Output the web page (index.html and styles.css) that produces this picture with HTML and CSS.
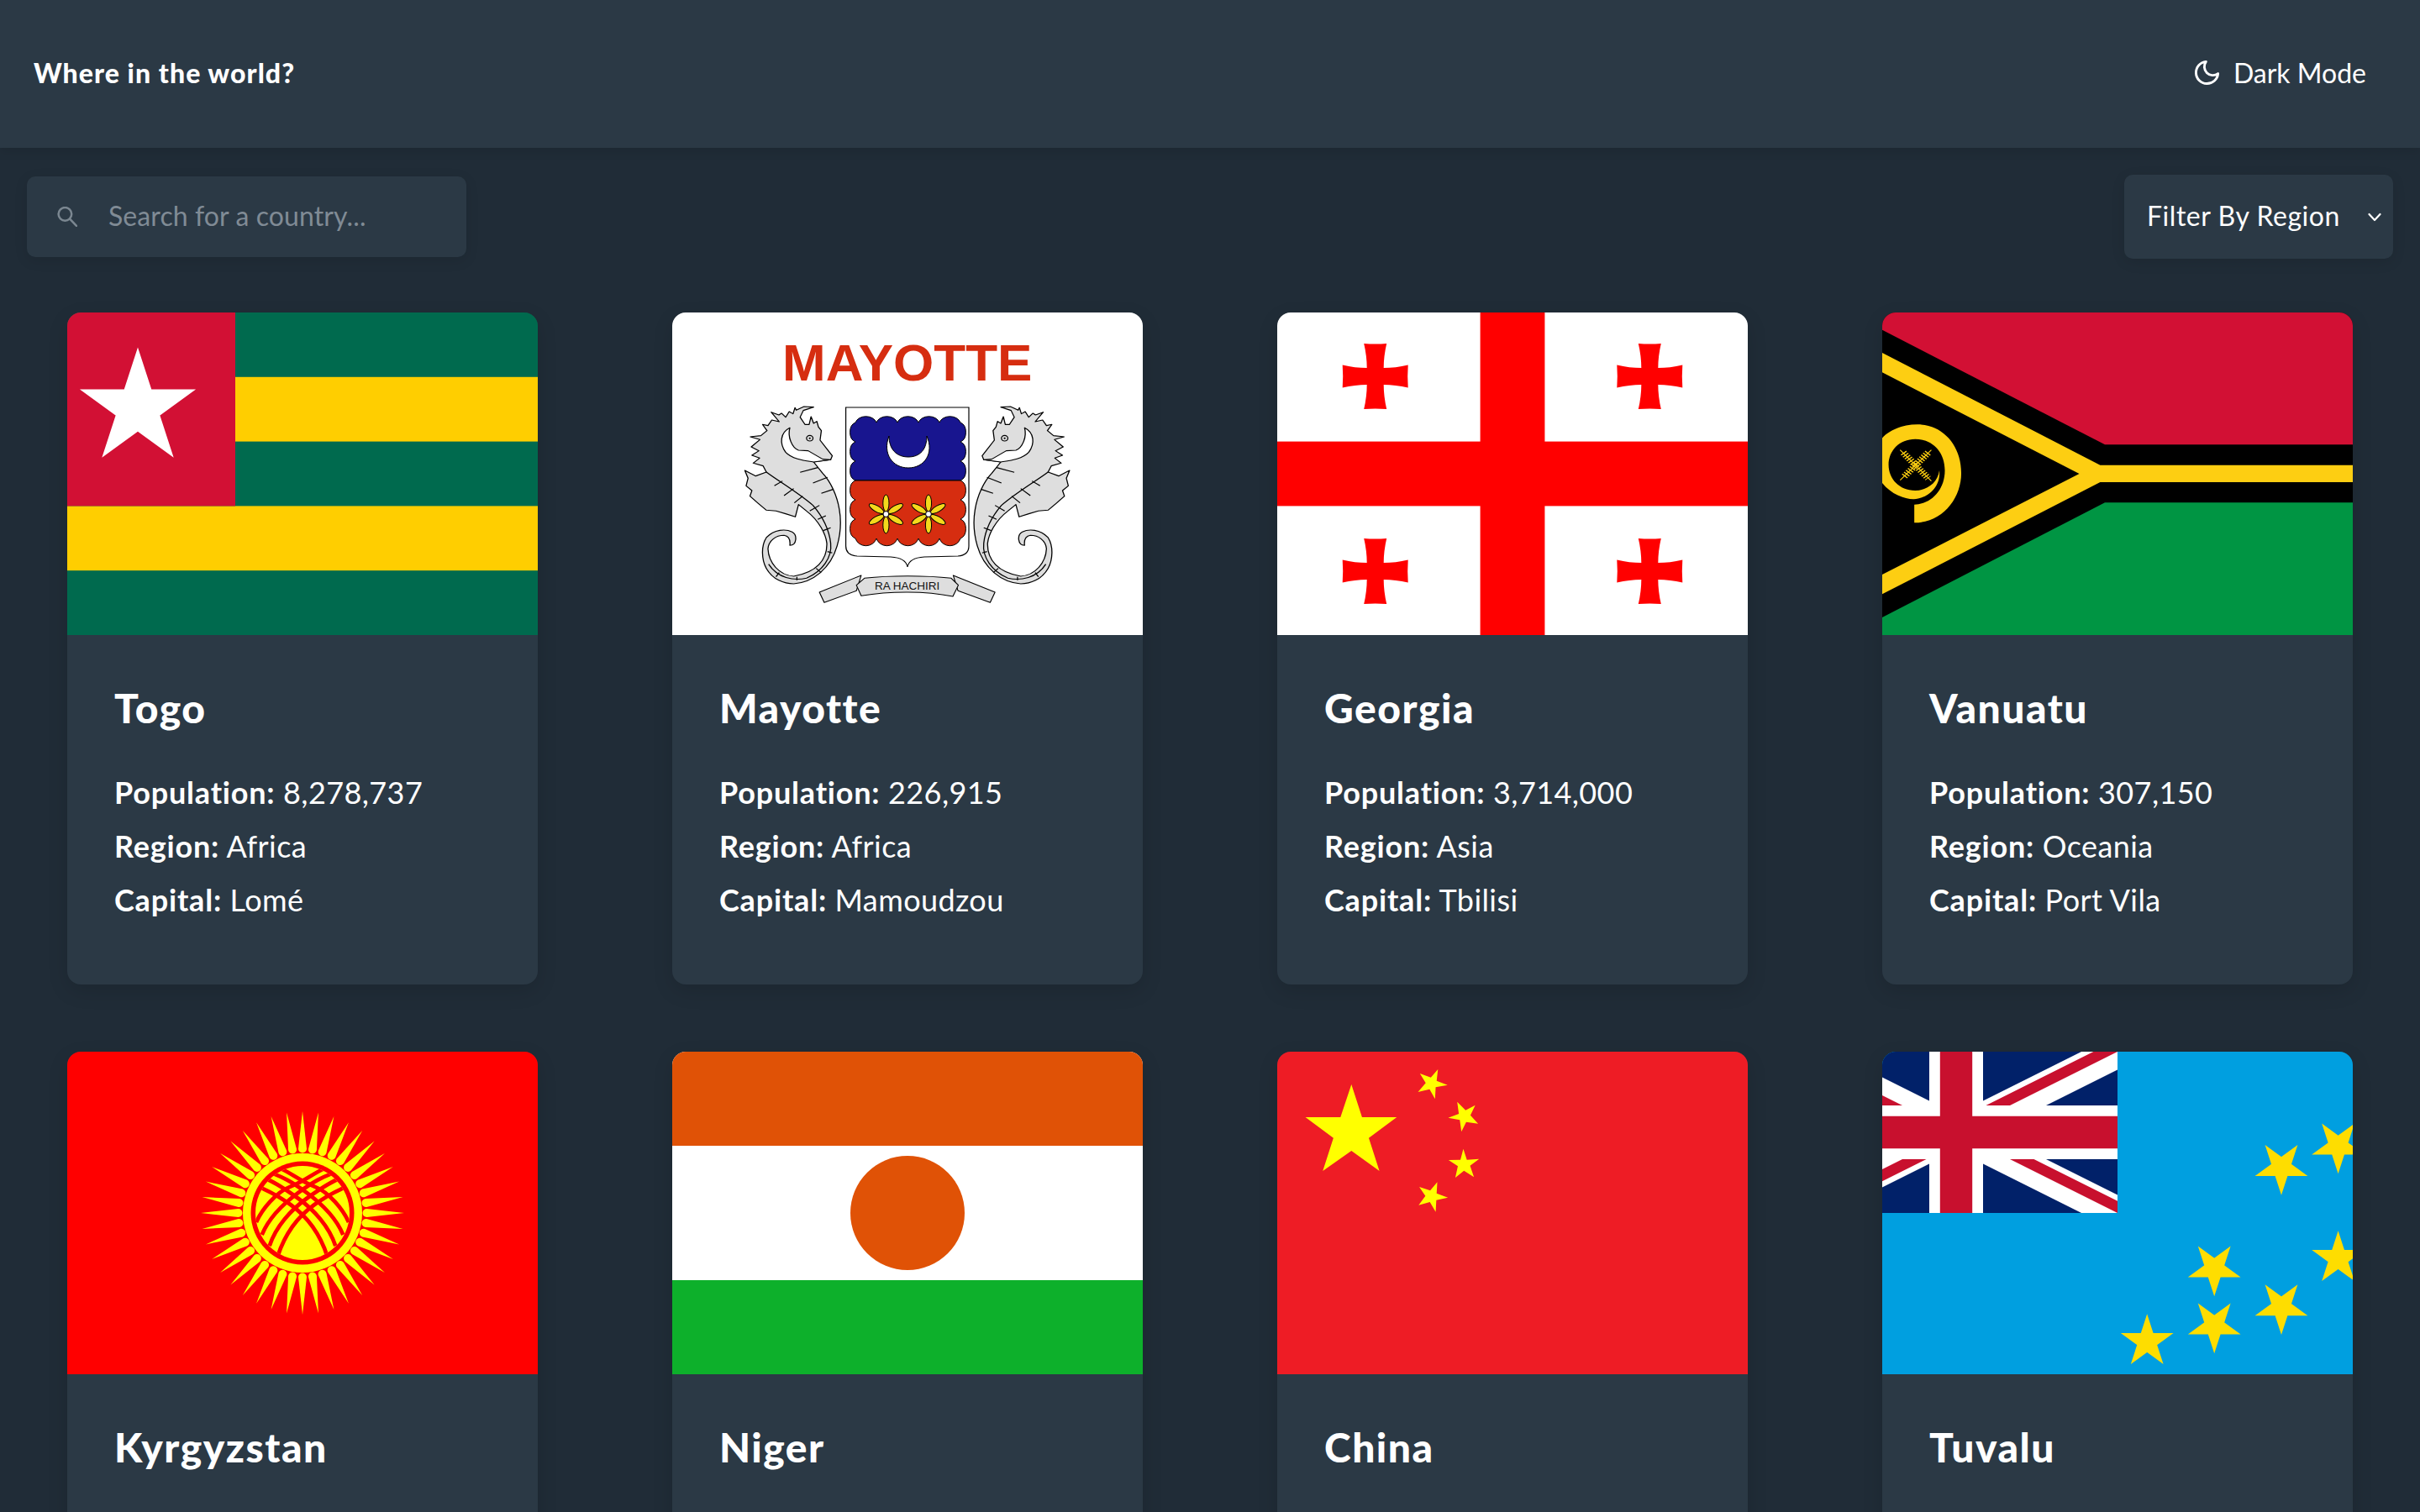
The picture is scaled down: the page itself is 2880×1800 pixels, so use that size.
FILE: index.html
```html
<!DOCTYPE html>
<html lang="en">
<head>
    <meta charset="utf-8">
    <title>Where in the world?</title>
    <link rel="stylesheet" href="styles.css">
</head>
<body>
    <header class="site-header">
        <h1 class="site-title">Where in the world?</h1>
        <button class="mode-toggle">
            <svg class="mode-icon" viewBox="0 0 24 24" fill="none" stroke="#fff" stroke-width="2" stroke-linecap="round" stroke-linejoin="round"><path d="M21 12.79A9 9 0 1 1 11.21 3 7 7 0 0 0 21 12.79z"/></svg>
            <span>Dark Mode</span>
        </button>
    </header>

    <div class="toolbar">
        <label class="search">
            <svg class="search-icon" viewBox="1 1 22 23" fill="none" stroke="#7b8791" stroke-width="2.4" stroke-linecap="round"><circle cx="9.5" cy="9.5" r="7.5"/><path d="M15 15l7.5 8"/></svg>
            <input class="search-input" type="text" placeholder="Search for a country...">
        </label>
        <div class="region-filter">
            <span>Filter By Region</span>
            <svg class="chevron" viewBox="0 0 16 11" fill="none" stroke="#fff" stroke-width="2.2" stroke-linecap="round" stroke-linejoin="round"><path d="M1.5 2l6.5 7 6.5-7"/></svg>
        </div>
    </div>

    <main class="country-grid">
        <!-- Togo -->
        <article class="card">
            <svg class="flag" viewBox="0 0 560 384">
                <rect width="560" height="384" fill="#006a4e"/>
                <rect y="76.8" width="560" height="76.8" fill="#ffce00"/>
                <rect y="230.4" width="560" height="76.8" fill="#ffce00"/>
                <rect width="200" height="230.4" fill="#d21034"/>
                <polygon transform="translate(84 114) scale(2.2)" fill="#fff" points="0,-33 19.4,26.7 -31.4,-10.2 31.4,-10.2 -19.4,26.7"/>
            </svg>
            <div class="card-body">
                <h2 class="country-name">Togo</h2>
                <p class="fact"><b>Population:</b> 8,278,737</p>
                <p class="fact"><b>Region:</b> Africa</p>
                <p class="fact"><b>Capital:</b> Lomé</p>
            </div>
        </article>

        <!-- Mayotte -->
        <article class="card">
            <svg class="flag" viewBox="0 0 560 384">
                <rect width="560" height="384" fill="#fff"/>
                <text class="flag-title" x="279.7" y="81" text-anchor="middle">MAYOTTE</text>
                <g transform="translate(-20 -12) scale(0.3827 0.3333)">
                    <g id="seahorse" fill="#dedede" stroke="#000" stroke-width="3.4" stroke-linejoin="round">
                        <path d="M545 562L550 548L512 492L516 458L507 445L502 425L492 432L484 408L478 436L465 436L450 410L460 386L492 374L462 372L438 385L434 376L428 398L416 390L405 410L392 396L384 402L360 392L385 426L362 420L350 440L333 436L347 458L328 476L295 480L325 490L298 516L322 530L300 546L324 556L304 574L335 584L345 606L312 620L278 600L288 628L282 655L300 672L294 692L320 718L345 742L375 745L405 755L435 766L445 722L470 745C510 780 530 830 533 860C535 920 500 965 430 978C385 975 352 930 350 880C352 850 375 832 400 832C415 835 420 850 418 868C440 868 442 830 425 820C405 808 370 810 345 840C328 870 330 920 345 950C365 990 400 1005 430 1005C490 1000 545 950 565 870C575 830 578 780 572 740C565 690 545 640 520 610L492 570Z"/>
                        <path fill="#fff" d="M418 448C388 465 385 505 405 535C425 560 465 565 492 570L545 562L520 560L475 530L445 528C425 520 410 480 418 448Z"/>
                        <path fill="none" d="M345 606C385 640 445 680 490 725C520 765 540 810 545 860C550 910 520 960 470 985C430 995 380 985 352 935"/>
                        <path fill="none" d="M370 655L395 638M400 690L430 665M432 716L458 692M480 745L510 725M505 775L530 762M522 815L545 805M450 607L505 590M490 645L535 625M516 682L552 668M535 890L550 895M500 950L515 965M440 980L440 992M385 965L375 980"/>
                        <circle cx="480" cy="485" r="10" fill="none"/>
                        <circle cx="480" cy="485" r="3" fill="#000" stroke="none"/>
                    </g>
                    <use href="#seahorse" transform="translate(1566 0) scale(-1 1)"/>
                    <g fill="#dedede" stroke="#000" stroke-width="3" stroke-linejoin="round">
                        <path d="M640 975L510 1035L525 1072L625 1030Z"/>
                        <path d="M926 975L1056 1035L1041 1072L941 1030Z"/>
                        <path d="M625 1010L650 985C730 975 840 975 920 985L942 1010L925 1050C840 1030 730 1030 640 1048Z"/>
                    </g>
                </g>
                <text class="flag-motto" x="279.7" y="330" text-anchor="middle">RA HACHIRI</text>
                <path fill="#fff" stroke="#000" stroke-width="1.2" d="M206.6 113H353V278Q353 289 340 290L300 291Q282 292 280 303Q278 292 260 291L220 290Q206.6 289 206.6 278Z"/>
                <path fill="#18158f" stroke="#000" d="M218 131a13 10 0 0 1 25 0a13 10 0 0 1 25 0a13 10 0 0 1 25 0a13 10 0 0 1 25 0a13 10 0 0 1 25 0a9 12 0 0 1 0 23a9 12 0 0 1 0 23a9 12 0 0 1 0 23H218a9 12 0 0 1 0 -23a9 12 0 0 1 0 -23a9 12 0 0 1 0 -23Z"/>
                <path fill="#d62d10" stroke="#000" d="M218 200H343a9 12 0 0 1 0 23a9 12 0 0 1 0 23a9 12 0 0 1 0 23a13 12 0 0 1 -25 0a13 12 0 0 1 -25 0a13 12 0 0 1 -25 0a13 12 0 0 1 -25 0a13 12 0 0 1 -25 0a9 12 0 0 1 0 -23a9 12 0 0 1 0 -23a9 12 0 0 1 0 -23Z"/>
                <path fill="#fff" stroke="#000" d="M258 147C250 168 262 185 281 185C300 185 312 168 303 147C303 163 295 172 281 172C267 172 258 163 258 147Z"/>
                <g id="flower" transform="translate(254.4 240)" fill="#f4d81c" stroke="#000">
                    <ellipse cy="-13" rx="3.6" ry="10"/>
                    <ellipse cy="-13" rx="3.6" ry="10" transform="rotate(60)"/>
                    <ellipse cy="-13" rx="3.6" ry="10" transform="rotate(120)"/>
                    <ellipse cy="-13" rx="3.6" ry="10" transform="rotate(180)"/>
                    <ellipse cy="-13" rx="3.6" ry="10" transform="rotate(240)"/>
                    <ellipse cy="-13" rx="3.6" ry="10" transform="rotate(300)"/>
                    <circle r="3.4" fill="#fff"/>
                </g>
                <use href="#flower" x="50.6"/>
            </svg>
            <div class="card-body">
                <h2 class="country-name">Mayotte</h2>
                <p class="fact"><b>Population:</b> 226,915</p>
                <p class="fact"><b>Region:</b> Africa</p>
                <p class="fact"><b>Capital:</b> Mamoudzou</p>
            </div>
        </article>

        <!-- Georgia -->
        <article class="card">
            <svg class="flag" viewBox="0 0 560 384">
                <rect width="560" height="384" fill="#fff"/>
                <rect x="241.6" width="76.8" height="384" fill="#f00"/>
                <rect y="153.6" width="560" height="76.8" fill="#f00"/>
                <path id="bolnisi" transform="translate(116.7 76)" fill="#f00" d="M-13.5 -39Q0 -38 13.5 -39Q10 -24 10 -10Q24 -10 39 -13.5Q38 0 39 13.5Q24 10 10 10Q10 24 13.5 39Q0 38 -13.5 39Q-10 24 -10 10Q-24 10 -39 13.5Q-38 0 -39 -13.5Q-24 -10 -10 -10Q-10 -24 -13.5 -39Z"/>
                <use href="#bolnisi" x="326.6"/>
                <use href="#bolnisi" y="232"/>
                <use href="#bolnisi" x="326.6" y="232"/>
            </svg>
            <div class="card-body">
                <h2 class="country-name">Georgia</h2>
                <p class="fact"><b>Population:</b> 3,714,000</p>
                <p class="fact"><b>Region:</b> Asia</p>
                <p class="fact"><b>Capital:</b> Tbilisi</p>
            </div>
        </article>

        <!-- Vanuatu -->
        <article class="card">
            <svg class="flag" viewBox="0 0 560 384">
                <rect width="560" height="384" fill="#000"/>
                <polygon fill="#d21034" points="0,0 560,0 560,157.3 265,157.3 0,20.7"/>
                <polygon fill="#009543" points="0,384 560,384 560,226.3 265,226.3 0,363"/>
                <polygon fill="#fdce12" points="0,48 259.4,181.7 560,181.7 560,202 259.4,202 0,335.3 0,312 234.5,192 0,71.3"/>
                <g transform="translate(-20 -12) scale(0.3827 0.3333)" fill="#fdce12">
                    <path d="M152 787C240 787 298 700 298 610C298 510 240 436 162 436C110 436 70 460 52 485L52 645C80 685 120 703 150 703C195 700 235 660 230 600C225 645 190 672 155 672C105 672 72 630 72 580C72 530 105 488 155 488C205 488 247 530 247 600C247 670 205 720 152 722Z"/>
                    <path fill="none" stroke="#fdce12" stroke-width="3" d="M108 527L205 638M205 527L108 635"/>
                    <path fill="none" stroke="#fdce12" stroke-width="22" stroke-dasharray="4 5" d="M118 537L195 628M195 537L118 625"/>
                </g>
            </svg>
            <div class="card-body">
                <h2 class="country-name">Vanuatu</h2>
                <p class="fact"><b>Population:</b> 307,150</p>
                <p class="fact"><b>Region:</b> Oceania</p>
                <p class="fact"><b>Capital:</b> Port Vila</p>
            </div>
        </article>

        <!-- Kyrgyzstan -->
        <article class="card">
            <svg class="flag" viewBox="0 0 560 384">
                <defs>
                    <path id="kg-ray" d="M121 0L76.5 -5A5 5 0 0 0 76.5 5Z"/>
                    <g id="kg-rays">
                        <use href="#kg-ray"/>
                        <use href="#kg-ray" transform="rotate(9)"/>
                        <use href="#kg-ray" transform="rotate(18)"/>
                        <use href="#kg-ray" transform="rotate(27)"/>
                        <use href="#kg-ray" transform="rotate(36)"/>
                    </g>
                    <clipPath id="kg-disc"><circle cx="480" cy="492" r="168"/></clipPath>
                    <g id="kg-lines" fill="none" stroke="#f00" stroke-width="14">
                        <path d="M392 645C420 560 470 500 523 462S600 415 628 402"/>
                        <path d="M362 610C385 540 440 480 494 441S575 385 606 372"/>
                        <path d="M335 570C360 510 410 460 466 419S550 365 588 350"/>
                        <path d="M315 525C335 480 385 418 437 398S520 350 555 335"/>
                    </g>
                </defs>
                <rect width="560" height="384" fill="#f00"/>
                <g transform="translate(280 192)" fill="#ff0">
                    <use href="#kg-rays"/>
                    <use href="#kg-rays" transform="rotate(45)"/>
                    <use href="#kg-rays" transform="rotate(90)"/>
                    <use href="#kg-rays" transform="rotate(135)"/>
                    <use href="#kg-rays" transform="rotate(180)"/>
                    <use href="#kg-rays" transform="rotate(225)"/>
                    <use href="#kg-rays" transform="rotate(270)"/>
                    <use href="#kg-rays" transform="rotate(315)"/>
                    <circle r="71"/>
                    <circle r="61.5" fill="#f00"/>
                    <circle r="56"/>
                </g>
                <g transform="translate(120 28) scale(0.3333)" clip-path="url(#kg-disc)">
                    <use href="#kg-lines"/>
                    <use href="#kg-lines" transform="translate(960 0) scale(-1 1)"/>
                </g>
            </svg>
            <div class="card-body">
                <h2 class="country-name">Kyrgyzstan</h2>
            </div>
        </article>

        <!-- Niger -->
        <article class="card">
            <svg class="flag" viewBox="0 0 560 384">
                <rect width="560" height="384" fill="#fff"/>
                <rect width="560" height="112" fill="#e05206"/>
                <rect y="272" width="560" height="112" fill="#0db02b"/>
                <circle cx="280" cy="192" r="68" fill="#e05206"/>
            </svg>
            <div class="card-body">
                <h2 class="country-name">Niger</h2>
            </div>
        </article>

        <!-- China -->
        <article class="card">
            <svg class="flag" viewBox="0 0 560 384">
                <rect width="560" height="384" fill="#ee1c25"/>
                <g transform="translate(-20 -12) scale(0.3827 0.3333)" fill="#ff0">
                    <polygon points="283,153 316,270 424,270 337,344 370,462 283,390 194,462 227,344 140,270 249,270"/>
                    <polygon points="552,99 548,140 582,155 545,163 543,205 526,170 490,180 514,148 496,114 530,128"/>
                    <polygon points="612,215 638,245 668,227 653,263 677,293 640,287 625,322 620,280 584,272 617,258"/>
                    <polygon points="631,383 642,422 680,419 652,443 664,484 633,461 606,486 614,445 585,423 622,422"/>
                    <polygon points="550,502 548,542 583,557 547,566 545,608 527,573 492,584 513,551 494,519 528,532"/>
                </g>
            </svg>
            <div class="card-body">
                <h2 class="country-name">China</h2>
            </div>
        </article>

        <!-- Tuvalu -->
        <article class="card">
            <svg class="flag" viewBox="0 0 560 384">
                <defs>
                    <polygon id="tv-star" fill="#fedd00" points="0,-33 19.4,26.7 -31.4,-10.2 31.4,-10.2 -19.4,26.7"/>
                    <clipPath id="tv-pinwheel"><path d="M30 15h30v15zv15h-30zh-30v-15zv-15h30z"/></clipPath>
                </defs>
                <rect width="560" height="384" fill="#009fe0"/>
                <svg x="-104" width="384" height="192" viewBox="0 0 60 30" preserveAspectRatio="none">
                    <rect width="60" height="30" fill="#012169"/>
                    <path d="M0 0L60 30M60 0L0 30" stroke="#fff" stroke-width="6"/>
                    <path d="M0 0L60 30M60 0L0 30" stroke="#c8102e" stroke-width="4" clip-path="url(#tv-pinwheel)"/>
                    <path d="M30 0v30M0 15h60" stroke="#fff" stroke-width="10"/>
                    <path d="M30 0v30M0 15h60" stroke="#c8102e" stroke-width="6"/>
                </svg>
                <use href="#tv-star" transform="translate(475 137.7) rotate(180)"/>
                <use href="#tv-star" transform="translate(542.6 112.3) rotate(180)"/>
                <use href="#tv-star" transform="translate(542.6 246.3)"/>
                <use href="#tv-star" transform="translate(395.2 258.3) rotate(180)"/>
                <use href="#tv-star" transform="translate(395.2 326.3) rotate(180)"/>
                <use href="#tv-star" transform="translate(475 304) rotate(180)"/>
                <use href="#tv-star" transform="translate(315.2 345.3)"/>
            </svg>
            <div class="card-body">
                <h2 class="country-name">Tuvalu</h2>
            </div>
        </article>
    </main>
</body>
</html>
```

FILE: styles.css
```css
* {
    box-sizing: border-box;
}
html, body {
    height: 100vh;
    overflow: hidden;
}
body {
    margin: 0;
    font-family: "Lato", "Noto Sans", sans-serif;
    font-size: 32px;
    color: #fff;
    background-color: #202c37;
}

/* Header */
.site-header {
    height: 176px;
    display: flex;
    justify-content: space-between;
    align-items: center;
    padding: 0 64px 4px 40px;
    background-color: #2b3945;
    box-shadow: 0 4px 12px rgba(0, 0, 0, 0.1);
}
.site-title {
    margin: 0;
    font-size: 32px;
    font-weight: 900;
    letter-spacing: 1.05px;
}
.mode-toggle {
    display: flex;
    align-items: center;
    gap: 14px;
    padding: 0;
    border: none;
    background: none;
    color: #fff;
    font: inherit;
}
.mode-icon {
    width: 35px;
    height: 35px;
}

/* Search and filter */
.toolbar {
    display: flex;
    justify-content: space-between;
    align-items: center;
    padding: 32px;
    margin-bottom: 32px;
}
.search {
    width: 523px;
    height: 96px;
    display: flex;
    align-items: center;
    gap: 37px;
    padding-left: 36px;
    background-color: #2b3945;
    border-radius: 10px;
    box-shadow: 0 4px 16px rgba(0, 0, 0, 0.1);
}
.search-icon {
    width: 24px;
    height: 24px;
    flex: none;
}
.search-input {
    flex: 1;
    min-width: 0;
    padding: 0 0 4px;
    border: none;
    outline: none;
    background: none;
    color: #fff;
    font: inherit;
    letter-spacing: 0.1px;
}
.search-input::placeholder {
    color: #808b95;
    opacity: 1;
}
.region-filter {
    width: 320px;
    height: 100px;
    display: flex;
    align-items: center;
    justify-content: space-between;
    padding: 0 14px 4px 27px;
    background-color: #2b3945;
    border-radius: 10px;
    box-shadow: 0 4px 16px rgba(0, 0, 0, 0.1);
    letter-spacing: 0.55px;
}
.chevron {
    width: 16px;
    height: 11px;
    margin-top: 4px;
}

/* Cards */
.country-grid {
    display: grid;
    grid-template-columns: repeat(4, 560px);
    column-gap: 160px;
    row-gap: 80px;
    padding: 0 80px;
}
.card {
    height: 800px;
    overflow: hidden;
    background-color: #2b3945;
    border-radius: 16px;
    box-shadow: 0 8px 24px rgba(0, 0, 0, 0.12);
}
.flag {
    display: block;
    width: 560px;
    height: 384px;
}
.flag-title {
    font-family: "Liberation Sans", sans-serif;
    font-size: 62px;
    font-weight: 700;
    fill: #d62d10;
}
.flag-motto {
    font-family: "Liberation Sans", sans-serif;
    font-size: 13.5px;
    fill: #111;
}
.card-body {
    padding: 55px 56px 0;
}
.country-name {
    margin: 0 0 36px;
    font-size: 48px;
    font-weight: 900;
    line-height: 64px;
    letter-spacing: 1.5px;
}
.fact {
    margin: 0;
    font-size: 36px;
    line-height: 64px;
    font-weight: 400;
    letter-spacing: 0.4px;
}
.fact b {
    font-weight: 700;
    letter-spacing: 0.8px;
}
```
